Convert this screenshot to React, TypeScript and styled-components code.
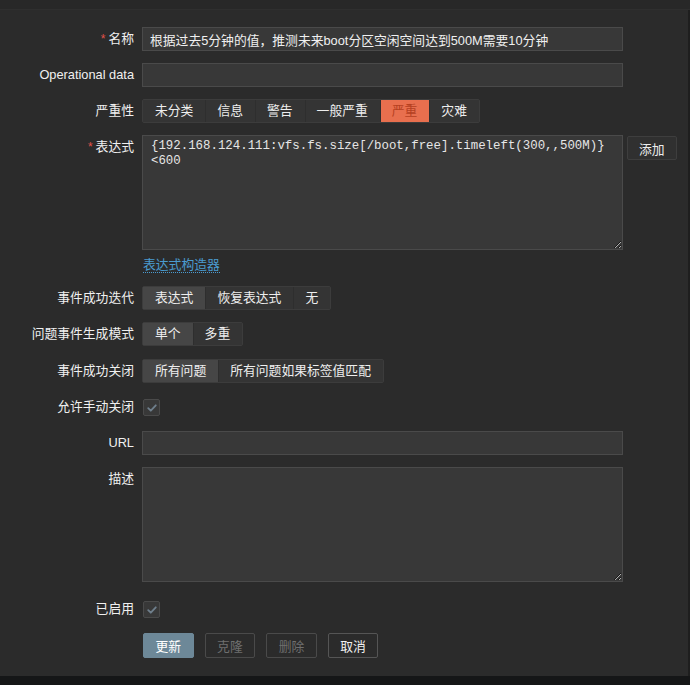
import React, { useState } from 'react';
import styled, { createGlobalStyle, css } from 'styled-components';

const GlobalStyle = createGlobalStyle`
  html, body {
    margin: 0;
    padding: 0;
    background: #2b2b2b;
  }
  body {
    font-family: 'Liberation Sans', 'Noto Sans CJK SC', Arial, sans-serif;
    font-size: 12.8px;
    color: #f0f0f0;
  }
  * {
    box-sizing: border-box;
  }
`;

const severities = ['未分类', '信息', '警告', '一般严重', '严重', '灾难'];

const expression =
  '{192.168.124.111:vfs.fs.size[/boot,free].timeleft(300,,500M)}\n<600';

type SegProps = {
  items: string[];
  active: number;
  hot?: boolean;
};

const Segmented: React.FC<SegProps> = ({ items, active, hot }) => {
  const [current, setCurrent] = useState(active);
  return (
    <SegGroup>
      {items.map((item, i) => (
        <SegItem
          key={item}
          type="button"
          $active={i === current}
          $hot={hot && i === current}
          onClick={() => setCurrent(i)}
        >
          {item}
        </SegItem>
      ))}
    </SegGroup>
  );
};

const Check = () => (
  <CheckBox>
    <svg width="12" height="12" viewBox="0 0 12 12">
      <path
        d="M2.2 6.2 L4.8 8.7 L9.8 3.3"
        fill="none"
        stroke="#6f7f8c"
        strokeWidth="1.8"
        strokeLinecap="round"
        strokeLinejoin="round"
      />
    </svg>
  </CheckBox>
);

export default function App() {
  return (
    <Page>
      <GlobalStyle />
      <TopBar />
      <Main>
        <Form>
          <Label $required>名称</Label>
          <Field>
            <TextInput defaultValue="根据过去5分钟的值，推测未来boot分区空闲空间达到500M需要10分钟" />
          </Field>

          <Label>Operational data</Label>
          <Field>
            <TextInput defaultValue="" />
          </Field>

          <Label>严重性</Label>
          <Field>
            <Segmented items={severities} active={4} hot />
          </Field>

          <Label $required>表达式</Label>
          <Field>
            <ExprRow>
              <TextArea $mono defaultValue={expression} spellCheck={false} />
              <GhostButton type="button">添加</GhostButton>
            </ExprRow>
            <LinkLine>
              <Link href="#">表达式构造器</Link>
            </LinkLine>
          </Field>

          <Label>事件成功迭代</Label>
          <Field>
            <Segmented items={['表达式', '恢复表达式', '无']} active={0} />
          </Field>

          <Label>问题事件生成模式</Label>
          <Field>
            <Segmented items={['单个', '多重']} active={0} />
          </Field>

          <Label $shift={1}>事件成功关闭</Label>
          <Field $shift={1}>
            <Segmented items={['所有问题', '所有问题如果标签值匹配']} active={0} />
          </Field>

          <Label>允许手动关闭</Label>
          <Field>
            <Check />
          </Field>

          <Label>URL</Label>
          <Field>
            <TextInput defaultValue="" />
          </Field>

          <Label>描述</Label>
          <Field>
            <TextArea defaultValue="" />
          </Field>

          <Label $shift={3}>已启用</Label>
          <Field $shift={3}>
            <Check />
          </Field>

          <span />
          <Actions>
            <ActionButton type="button" $variant="primary">更新</ActionButton>
            <ActionButton type="button" $variant="disabled">克隆</ActionButton>
            <ActionButton type="button" $variant="disabled">删除</ActionButton>
            <ActionButton type="button">取消</ActionButton>
          </Actions>
        </Form>
      </Main>
      <BottomBar />
    </Page>
  );
}

const Page = styled.div`
  width: 690px;
  height: 685px;
  display: flex;
  flex-direction: column;
  overflow: hidden;
`;

const TopBar = styled.div`
  height: 10px;
  flex: none;
  background: #282828;
  border-bottom: 1px solid #2f2f2f;
`;

const Main = styled.div`
  flex: 1;
  border-right: 2px solid #1e1e1e;
`;

const BottomBar = styled.div`
  height: 9px;
  flex: none;
  background: #151617;
`;

const Form = styled.div`
  display: grid;
  grid-template-columns: 134px 481px;
  column-gap: 8px;
  row-gap: 12px;
  padding-top: 17px;
`;

const Label = styled.label<{ $required?: boolean; $shift?: number }>`
  text-align: right;
  line-height: 24px;
  color: #f0f0f0;
  white-space: nowrap;
  margin-top: ${(p) => p.$shift || 0}px;

  ${(p) =>
    p.$required &&
    css`
      &::before {
        content: '*';
        color: #e2524a;
        margin-right: 3px;
        font-size: 12px;
      }
    `}
`;

const Field = styled.div<{ $shift?: number }>`
  display: flex;
  flex-direction: column;
  align-items: flex-start;
  min-height: 24px;
  margin-top: ${(p) => p.$shift || 0}px;
`;

const inputBase = css`
  background: #383838;
  border: 1px solid #4a4a4a;
  color: #f0f0f0;
  font-family: 'Liberation Sans', 'Noto Sans CJK SC', Arial, sans-serif;
  font-size: 12.8px;
  outline: none;
  border-radius: 0;
`;

const TextInput = styled.input`
  ${inputBase};
  width: 481px;
  height: 24px;
  padding: 0 7px;
`;

const TextArea = styled.textarea<{ $mono?: boolean }>`
  ${inputBase};
  width: 481px;
  height: 115px;
  padding: 3px 8px;
  resize: both;
  color-scheme: dark;
  ${(p) =>
    p.$mono &&
    css`
      font-family: 'Liberation Mono', 'Courier New', monospace;
      font-size: 12.4px;
      line-height: 15px;
      color: #e6e6e6;
    `}
`;

const ExprRow = styled.div`
  display: flex;
  align-items: flex-start;
  gap: 4px;
`;

const GhostButton = styled.button`
  height: 24px;
  padding: 0 11px;
  margin-top: 1px;
  background: #303030;
  border: 1px solid #3e3e3e;
  border-radius: 2px;
  color: #ececec;
  font-family: inherit;
  font-size: 12.8px;
  white-space: nowrap;
`;

const LinkLine = styled.div`
  margin-top: 6px;
  height: 18px;
  line-height: 18px;
`;

const Link = styled.a`
  color: #4a9bd0;
  text-decoration: none;
  border-bottom: 1px dotted #4a9bd0;
  margin-left: 1px;
`;

const SegGroup = styled.div`
  display: inline-flex;
  height: 24px;
  background: #333333;
  border: 1px solid #3c3c3c;
  border-radius: 2px;
`;

const SegItem = styled.button<{ $active?: boolean; $hot?: boolean }>`
  all: unset;
  padding: 0 12px;
  line-height: 22px;
  color: #eeeeee;
  background: ${(p) => (p.$active ? '#464646' : '#343434')};
  box-shadow: inset 1px 0 0 #2e2e2e;
  cursor: pointer;
  white-space: nowrap;

  &:first-child {
    box-shadow: none;
  }

  ${(p) =>
    p.$hot &&
    css`
      background: #e86f4e;
      color: #b5401f;
    `}
`;

const CheckBox = styled.span`
  display: inline-flex;
  align-items: center;
  justify-content: center;
  width: 17px;
  height: 17px;
  margin: 4px 0 0 1px;
  background: #383838;
  border: 1px solid #4a4a4a;
  border-radius: 2px;
`;

const Actions = styled.div`
  display: flex;
  gap: 11px;
  margin-top: 0;
  padding-left: 1px;
`;

const ActionButton = styled.button<{ $variant?: 'primary' | 'disabled' }>`
  height: 25px;
  padding: 0 11.5px;
  font-family: inherit;
  font-size: 12.8px;
  border-radius: 2px;
  background: transparent;
  border: 1px solid #555555;
  color: #f0f0f0;

  ${(p) =>
    p.$variant === 'primary' &&
    css`
      background: #6d8898;
      border-color: #6d8898;
      color: #ffffff;
    `}

  ${(p) =>
    p.$variant === 'disabled' &&
    css`
      border-color: #4a4a4a;
      color: #6f6f6f;
    `}
`;
